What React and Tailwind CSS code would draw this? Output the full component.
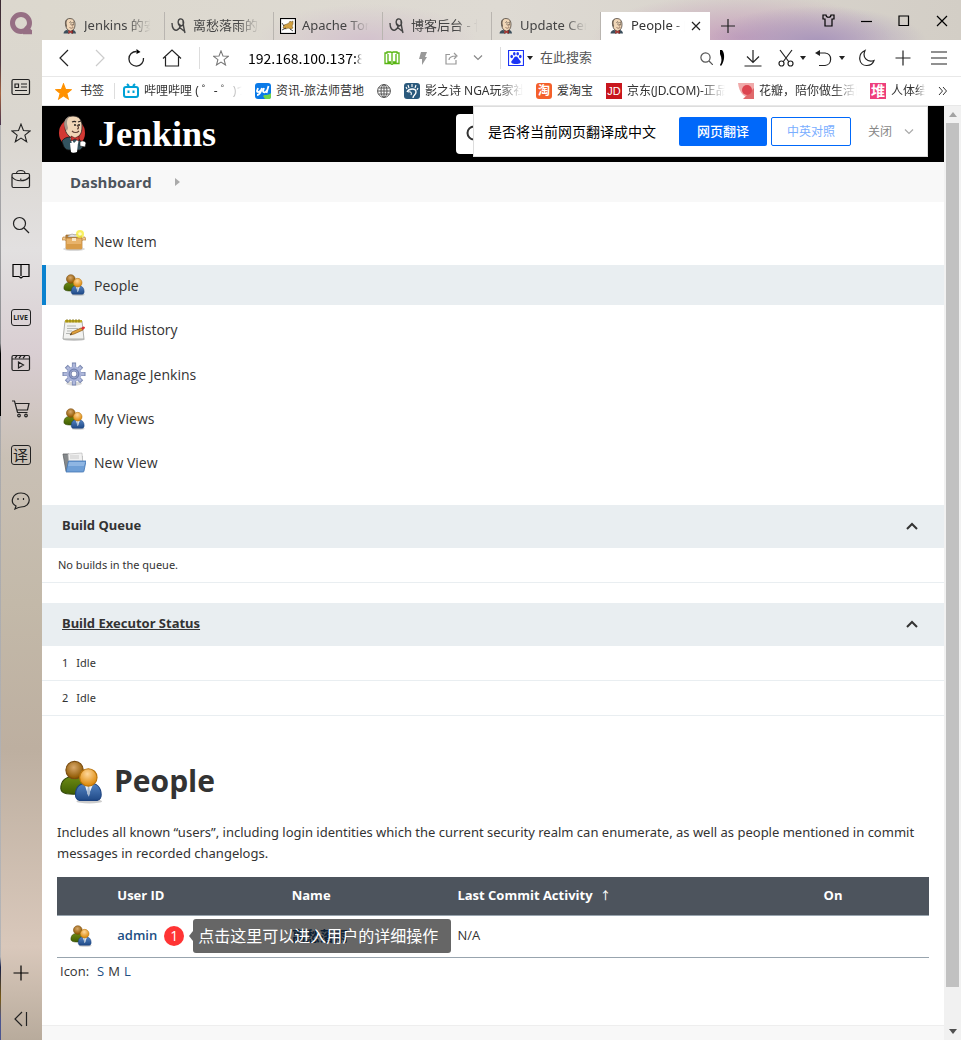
import React from 'react';

const Icon = ({ w = 16, h = 16, box, color = '#222', width = 1.2, fill = 'none', className = '', children }) => (
  <svg
    width={w}
    height={h}
    viewBox={box || `0 0 ${w} ${h}`}
    fill={fill}
    stroke={color}
    strokeWidth={width}
    className={`shrink-0 ${className}`}
    aria-hidden="true"
  >
    {children}
  </svg>
);

const ButlerHead = () => (
  <g stroke="none">
    <path d="M3 31c0-4 3-6 6-7l10-1c5 1 9 3 9 8z" fill="#3c4f5c" />
    <path d="M11 22h9l-1 9h-6z" fill="#fff" />
    <path d="M7 13C6 6 9 1 16 1s10 5 10 11-1 9-4 12-7 3-10 0-4-5-5-11z" fill="#f0d6b7" stroke="#3a302b" strokeWidth="1.4" />
    <path d="M7 15C5 9 7 3 12 2c-3 3-3 6-3 9l1 5-1 3z" fill="#6d6156" />
    <path d="M15 9c2-2 3-1 4 0M21 9l3-1" fill="none" stroke="#3a302b" strokeWidth="1.5" />
    <circle cx="18" cy="12" r="1.200" fill="#222" />
    <circle cx="23" cy="12" r="1.200" fill="#222" />
    <path d="M20 12c2 2 3 3 1 4l-2-1M15 19c3 2 6 2 8-1" fill="none" stroke="#69483a" strokeWidth="1.3" />
    <path d="M13 25l4 2 4-2v6l-4-2-4 2z" fill="#d33833" stroke="#5d1f1c" />
  </g>
);

const JenkinsFavicon = () => (
  <Icon box="0 0 32 32"><ButlerHead /></Icon>
);

const JenkinsLogo = () => (
  <Icon w={30} h={40} box="0 0 30 40">
    <g stroke="none">
      <ellipse cx="14" cy="19" rx="13" ry="14" fill="#d33833" />
      <path d="M4 27c2-3 5-4 9-4 5 0 9 2 11 6l1 4-3 3H10c-4-1-5-5-6-9z" fill="#33535f" stroke="#141414" strokeWidth="0.8" />
      <path d="M12 23l4 6 5-5-1 6h-6z" fill="#fff" />
      <path d="M7 12C6 6 9 2 15 2s9 4 9 10-1 8-4 11-6 2-9-1-4-5-4-10z" fill="#f0d6b7" stroke="#2b2523" strokeWidth="0.8" />
      <path d="M7 14C5 8 7 4 12 2c-3 3-3 5-3 8l1 4-1 3z" fill="#a4978b" />
      <path d="M14 8c2-1 3-1 4 0M20 8l3-1" fill="none" stroke="#2b2523" />
      <circle cx="17" cy="11" r="0.9" fill="#111" />
      <circle cx="21" cy="11" r="0.9" fill="#111" />
      <path d="M19 11c2 2 2 4 0 4M14 17c2 2 5 2 7 0" fill="none" stroke="#5c4035" />
      <path d="M13 22l4 2 4-2v5l-4-2-4 2z" fill="#d33833" stroke="#4a1412" strokeWidth="0.6" />
      <path d="M12 29h8l-1 9c-2 1-5 1-6 0z" fill="#fff" />
      <path d="M22 28c2-2 5-1 6 1l-1 4-5-1z" fill="#fff" stroke="#222" strokeWidth="0.6" />
    </g>
  </Icon>
);

const BlogFavicon = () => (
  <Icon color="#444" width={1.4}>
    <path d="M1 5c0 5 2 8 5 7 2-1 3-2 3-4M10 8C7 8 6 2 9 1c4-1 5 6 1 7l-2-2M12 2c0 5 1 9 2 13M8 9l5 4" />
  </Icon>
);

const TomcatFavicon = () => (
  <Icon w={16} h={16} color="none">
    <rect x="0.5" y="0.5" width="15" height="15" fill="#fff" stroke="#000" />
    <path d="M3 10l1-3 3-1 2-1 1-2 1 1 2-1v3l-1 2 1 2-2 1-3-1-2 1z" fill="#d2a041" stroke="#6d5420" strokeWidth="0.5" />
    <path d="M2 12l4-2M10 11l3 2M2 5l2 3" stroke="#222" strokeWidth="0.8" />
  </Icon>
);

const PeopleIcon = ({ size = 22 }) => (
  <Icon w={size} h={size} box="0 0 48 48" color="none">
    <defs>
      <radialGradient id="headBack" cx="0.45" cy="0.35" r="0.6">
        <stop offset="0" stopColor="#d8a86a" />
        <stop offset="1" stopColor="#8f5902" />
      </radialGradient>
      <radialGradient id="headFront" cx="0.45" cy="0.3" r="0.65">
        <stop offset="0" stopColor="#ffd79a" />
        <stop offset="1" stopColor="#dd8a0c" />
      </radialGradient>
      <linearGradient id="bodyBack" x1="0" y1="0" x2="0" y2="1">
        <stop offset="0" stopColor="#6d8a14" />
        <stop offset="1" stopColor="#3f5e02" />
      </linearGradient>
      <linearGradient id="bodyFront" x1="0" y1="0" x2="0" y2="1">
        <stop offset="0" stopColor="#5585c4" />
        <stop offset="1" stopColor="#204a87" />
      </linearGradient>
    </defs>
    <ellipse cx="33" cy="45" rx="14" ry="2.5" fill="#000" opacity="0.2" />
    <path d="M2 31c0-8 5-13 14-13s13 5 13 12v5c-6 3-21 3-25 0-1-1-2-2-2-4z" fill="url(#bodyBack)" stroke="#33480a" />
    <circle cx="17" cy="11" r="9.500" fill="url(#headBack)" stroke="#7a4c10" />
    <path d="M18 38c0-9 5-13 14-13 10 0 14 6 14 13 0 4-1 5-4 6H22c-3-1-4-2-4-6z" fill="url(#bodyFront)" stroke="#1d4380" />
    <path d="M28 27l4 12 5-12z" fill="#eef2f7" />
    <path d="M31.500 29h1.500l1 7-1.500 4-2-4z" fill="#a9bad0" />
    <circle cx="32" cy="19" r="9.500" fill="url(#headFront)" stroke="#b8730c" />
  </Icon>
);

const BoxIcon = () => (
  <Icon w={24} h={22} color="none">
    <ellipse cx="12" cy="19" rx="11" ry="2" fill="#000" opacity="0.15" />
    <path d="M4 5h15l2 5H3z" fill="#b77f3a" stroke="#8f5e22" strokeWidth="0.6" />
    <path d="M6 6l4-2 3 1 3-1 2 3H6z" fill="#e6e6e6" stroke="#999" strokeWidth="0.6" />
    <path d="M4 8h16v10c0 1-1 1-1 1H5s-1 0-1-1z" fill="#e8b36b" stroke="#b3762a" strokeWidth="0.7" />
    <path d="M4 14h16v4c0 1-1 1-1 1H5s-1 0-1-1z" fill="#d99c48" />
    <path d="M3 7H1L0 10h4M21 7h2l1 3h-4" fill="#f2c98d" stroke="#b3762a" strokeWidth="0.6" />
    <path d="M10 8h4v3h-4z" fill="#f9e6c6" />
    <circle cx="18" cy="4" r="4" fill="#f8ee3a" opacity="0.8" />
    <circle cx="18" cy="4" r="1.8" fill="#fffccb" />
  </Icon>
);

const NotepadIcon = () => (
  <Icon w={24} h={22} color="none">
    <ellipse cx="12" cy="20.5" rx="11" ry="1.5" fill="#000" opacity="0.2" />
    <path d="M3 2h17l2 18H1z" fill="#f2f2f0" stroke="#9a9c98" strokeWidth="0.8" />
    <path d="M3 1h17v2.500H3z" fill="#c0ab22" />
    <path d="M5 0v3.500M8 0v3.500M11 0v3.500M14 0v3.500M17 0v3.500" stroke="#7f6f10" strokeWidth="0.8" />
    <path d="M5 7h9M5 9.5h11M5 12h5M4 14.5h4" stroke="#b5b7b4" />
    <path d="M8 16l2-3 9-4 2 2-9 4z" fill="#e0a13c" stroke="#8c5a14" strokeWidth="0.7" />
    <path d="M19 9l2-1.500c2 0 2.500 1 1.500 2L21 11z" fill="#d33" />
    <path d="M8 16l1-2 1 1z" fill="#222" />
  </Icon>
);

const GearIcon = () => (
  <Icon w={24} h={24} color="none">
    <ellipse cx="12" cy="21.500" rx="8" ry="2" fill="#000" opacity="0.15" />
    <g stroke="#7684ad" strokeWidth="4.2">
      <path d="M12 .5v23M.5 12h23M4.300 4.300l15.400 15.400M19.700 4.300L4.300 19.700" />
    </g>
    <g stroke="#b0b9dc" strokeWidth="2.800">
      <path d="M12 1.500v21M1.500 12h21M5 5l14 14M19 5L5 19" />
    </g>
    <circle cx="12" cy="12" r="7.500" fill="#a8b2d8" />
    <circle cx="12" cy="12" r="4.800" stroke="#7181b0" strokeWidth="1.200" />
    <circle cx="12" cy="12" r="3" fill="#fff" stroke="#7e8ab2" />
  </Icon>
);

const FolderIcon = () => (
  <Icon w={24} h={22} color="none">
    <path d="M1 2h6l1 2h12v15H4z" fill="#85898c" stroke="#5f6366" strokeWidth="0.8" />
    <path d="M6 2l14-1 1 12H7z" fill="#f1f1f1" stroke="#b3b3b3" strokeWidth="0.6" />
    <path d="M8 4h9M8 6h9" stroke="#ccc" />
    <path d="M6.500 9H24l-2 10c0 1-1 1-2 1H4z" fill="#6f9fd6" stroke="#4175b3" strokeWidth="0.8" />
    <path d="M7 10h16l-1 4H6z" fill="#9dc0e8" opacity="0.7" />
  </Icon>
);

const Caret = ({ className = '' }) => (
  <span className={`h-0 w-0 shrink-0 border-x-[3px] border-t-[4px] border-x-transparent border-t-[#222] ${className}`} />
);

const StarPath = () => <path d="M9 1l2.2 5.8 6 .3-4.7 3.8 1.6 6L9 13.6 3.900 16.900l1.600-6L.8 7.100l6-.3z" />;

const tabs = [
  { title: 'Jenkins 的安装', icon: <JenkinsFavicon /> },
  { title: '离愁落雨的主页', icon: <BlogFavicon /> },
  { title: 'Apache Tomcat', icon: <TomcatFavicon /> },
  { title: '博客后台 - 博', icon: <BlogFavicon /> },
  { title: 'Update Center', icon: <JenkinsFavicon /> },
];

const bookmarks = [
  {
    title: '哔哩哔哩 ( ゜- ゜)つロ',
    icon: (
      <Icon color="#00a1d6" width={2}>
        <rect x="1" y="4" width="14" height="10" rx="2" />
        <path d="M4 1l2 2M12 1l-2 2" />
        <path d="M5.500 7.500v2.500M10.500 7.500v2.500" />
      </Icon>
    ),
  },
  {
    title: '资讯-旅法师营地',
    icon: (
      <Icon color="#fff" width={1.800}>
        <rect width="16" height="16" rx="3" fill="#0a7ae8" stroke="none" />
        <path d="M3 5l-1 3c0 2 4 1 5-3-1 4-2 7-5 7M9 5l-1 3c0 2 3 2 4-1M13.500 3l-2 7" />
        <path d="M8 13c2-2 5 0 8-3v3c0 3-1 3-3 3h-3z" fill="#6fd44b" stroke="none" />
      </Icon>
    ),
  },
  {
    title: '',
    label: '网页',
    icon: (
      <Icon w={14} h={14} color="#555" width={1}>
        <circle cx="7" cy="7" r="6.400" />
        <ellipse cx="7" cy="7" rx="3" ry="6.400" />
        <path d="M7 .6v12.800M.6 7h12.800M1.500 4h11M1.500 10h11" />
      </Icon>
    ),
  },
  {
    title: '影之诗 NGA玩家社区',
    icon: (
      <Icon color="#fff" width={1.4}>
        <rect width="16" height="16" rx="3" fill="#2b5a7d" stroke="none" />
        <path d="M3 9c2-4 9-4 9 0 0 3-3 3-3 6" width="2" />
        <path d="M4 9c3-1 4 1 3 3M3 6L2 4M5 5L4 2M8 4V1M11 5l1-3M13 7l1-2" strokeWidth="1.100" />
      </Icon>
    ),
  },
  {
    title: '爱淘宝',
    icon: (
      <span className="flex size-4 items-center justify-center rounded-[3px] bg-[#f4602a] text-[12px] font-bold leading-none text-white">淘</span>
    ),
  },
  {
    title: '京东(JD.COM)-正品',
    icon: (
      <span className="flex size-4 items-center justify-center bg-[#c8161d] font-['Liberation_Sans',sans-serif] text-[11px] leading-none text-white">JD</span>
    ),
  },
  {
    title: '花瓣，陪你做生活的',
    icon: (
      <Icon color="none">
        <path d="M0 0h16v16C6 15 1 10 0 0z" fill="#f0a9a9" />
        <path d="M16 5v11H5z" fill="#e06a6c" />
        <circle cx="9" cy="7" r="5" fill="#dd4550" />
      </Icon>
    ),
  },
  {
    title: '人体结构',
    short: true,
    icon: (
      <span className="flex size-4 items-center justify-center bg-[#ee3f7d] text-[14px] font-bold leading-none text-white">堆</span>
    ),
  },
];

const railItems = [
  {
    label: '新闻',
    icon: (
      <Icon w={20} h={18}>
        <rect x="1" y="1.500" width="17.500" height="15" rx="1.500" />
        <path d="M4 6h3.500v3.500H4zM10 6h6M10 9h6M4 12.500h12" />
      </Icon>
    ),
  },
  { label: '收藏', icon: <Icon w={20} h={20} box="0 0 18 18" width={1}><StarPath /></Icon> },
  {
    label: '工具箱',
    icon: (
      <Icon w={20} h={20}>
        <rect x="1" y="4.500" width="17.500" height="14" rx="1.500" />
        <path d="M5.500 4.500c0-4 8.500-4 8.500 0M1 8c4 5 13 5 17.500 0M9.800 9.500v1.500" />
      </Icon>
    ),
  },
  {
    label: '搜索',
    icon: (
      <Icon w={18} h={18}>
        <circle cx="7.500" cy="7.500" r="6" />
        <path d="M12 12l5 5" />
      </Icon>
    ),
  },
  {
    label: '阅读',
    icon: (
      <Icon w={18} h={16} color="#000" width={1.200}>
        <path d="M1 1.500h16v12h-6l-2 1.500-2-1.500H1zM9 2v11" />
      </Icon>
    ),
  },
  {
    label: '直播',
    icon: (
      <span className="flex h-[17px] w-5 items-center justify-center rounded-[3px] border border-[#222] font-['Open_Sans',sans-serif] text-[7px] font-bold leading-none text-[#222]">LIVE</span>
    ),
  },
  {
    label: '视频',
    icon: (
      <Icon w={20} h={18}>
        <rect x="1" y="1.500" width="17.500" height="15" rx="1.500" />
        <path d="M1 5h17.500M4 4l2-2M8 4l2-2M12 4l2-2M7.500 8l5 3-5 3z" />
      </Icon>
    ),
  },
  {
    label: '购物',
    icon: (
      <Icon w={20} h={18}>
        <path d="M1 1h2.500l3 11.500h10M4.500 3.500H18L16.500 10H6" />
        <circle cx="8" cy="15.500" r="1.300" />
        <circle cx="15" cy="15.500" r="1.300" />
      </Icon>
    ),
  },
  {
    label: '翻译',
    icon: (
      <span className="flex size-5 items-center justify-center rounded-[3px] border border-[#222] text-[15px] leading-none text-[#222]">译</span>
    ),
  },
  {
    label: '消息',
    icon: (
      <Icon w={20} h={18}>
        <path d="M4 17l1-3C-2 10 2 1 10 1c11 0 11 14 0 14-2 0-4 1-6 2z" />
        <path d="M7 6v2M12.500 6v2" />
      </Icon>
    ),
  },
];

const tasks = [
  { title: 'New Item', icon: <BoxIcon /> },
  { title: 'People', icon: <PeopleIcon />, active: true },
  { title: 'Build History', icon: <NotepadIcon /> },
  { title: 'Manage Jenkins', icon: <GearIcon /> },
  { title: 'My Views', icon: <PeopleIcon /> },
  { title: 'New View', icon: <FolderIcon /> },
];

const DesktopEdge = () => (
  <div className="w-px shrink-0 bg-[linear-gradient(180deg,#3a2a33_0%,#4f3840_6%,#a3613f_9%,#4a3550_12%,#b0b0b2_12%,#8f8f92_33%,#000_34%,#000_40%,#a9a9ab_40%,#b5b5b7_92%,#17204a_93%,#7a5a12_96%,#4b5590_98%)]" />
);

const Rail = () => (
  <aside className="flex w-[41px] shrink-0 flex-col items-center bg-[linear-gradient(180deg,#dcd8ce_0%,#dad6cf_12%,#e2e0e0_24%,#d9ced2_34%,#c9c0b5_44%,#c3b9a9_58%,#bdafa0_72%,#d9c8bb_91%,#b8ab9c_100%)] pr-[2px]">
    <div className="flex h-16 items-start pt-[11px]">
      <Icon w={24} h={24} color="#966f84" width={5}>
        <circle cx="12" cy="12" r="8.500" />
        <path d="M14 21.200h9M16 16l6 5" strokeWidth="4" />
      </Icon>
    </div>
    {railItems.map(({ label, icon }) => (
      <button key={label} type="button" aria-label={label} className="flex h-[46px] w-full items-center justify-center">
        {icon}
      </button>
    ))}
    <button type="button" aria-label="添加" className="mt-auto flex h-[50px] w-full items-center justify-center">
      <Icon color="#000"><path d="M8 .5v15M.5 8h15" /></Icon>
    </button>
    <button type="button" aria-label="收起" className="flex h-[42px] w-full items-center justify-center">
      <Icon><path d="M9 1L2 8l7 7M13.500 1v14" /></Icon>
    </button>
  </aside>
);

const TabStrip = () => (
  <div className="flex h-10 items-end bg-[radial-gradient(ellipse_110px_36px_at_775px_42px,#a896bb_0%,transparent_100%),radial-gradient(ellipse_150px_44px_at_700px_38px,#c6a0bc_0%,transparent_100%),radial-gradient(ellipse_110px_36px_at_325px_40px,#d3c2cd_0%,transparent_100%),linear-gradient(90deg,#dcd8ce_0%,#dedad3_50%,#d3cec6_100%)] pl-[14px]">
    {tabs.map(({ title, icon }, i) => (
      <button key={i} type="button" className="flex h-7 min-w-0 max-w-[109px] flex-1 items-center gap-[6px] border-r border-[#b9b5b0] pl-[6px] pr-3 text-[13px] text-[#444]">
        {icon}
        <span className="min-w-0 flex-1 overflow-hidden whitespace-nowrap text-left mask-[linear-gradient(90deg,#000_65%,transparent_98%)]">{title}</span>
      </button>
    ))}
    <div className="flex h-7 w-[109px] shrink-0 items-center gap-[6px] bg-white pl-2 text-[13px] text-[#333]">
      <JenkinsFavicon />
      <span className="w-[54px] overflow-hidden whitespace-nowrap mask-[linear-gradient(90deg,#000_82%,transparent)]">People - [Jenkins]</span>
      <button type="button" aria-label="关闭标签">
        <Icon w={10} h={10}><path d="M1 1l8 8M9 1L1 9" /></Icon>
      </button>
    </div>
    <button type="button" aria-label="新标签" className="mb-[7px] ml-[11px]">
      <Icon w={14} h={14}><path d="M7 0v14M0 7h14" /></Icon>
    </button>
    <div className="mb-[13px] ml-auto flex items-center gap-[26px] pr-[13px]">
      <button type="button" aria-label="皮肤">
        <Icon w={13} h={13} color="#000"><path d="M1 1h3c0 3 5 3 5 0h3v4h-2v7H3V5H1z" /></Icon>
      </button>
      <button type="button" aria-label="最小化">
        <Icon w={11} h={12} color="#000"><path d="M0 6.500h11" /></Icon>
      </button>
      <button type="button" aria-label="最大化">
        <Icon w={12} h={12} color="#000"><path d="M1 1h9.500v9.500H1z" /></Icon>
      </button>
      <button type="button" aria-label="关闭窗口">
        <Icon w={12} h={12} color="#000"><path d="M1 1l10 10M11 1L1 11" /></Icon>
      </button>
    </div>
  </div>
);

const ToolButton = ({ label, className = 'w-9', children }) => (
  <button type="button" aria-label={label} className={`flex h-9 shrink-0 items-center justify-center ${className}`}>
    {children}
  </button>
);

const Toolbar = () => (
  <div className="flex h-[37px] items-center border-b border-[#e8e8e8] bg-white pl-1">
    <ToolButton label="后退">
      <Icon w={18} h={18}><path d="M13 1L5 9l8 8" /></Icon>
    </ToolButton>
    <ToolButton label="前进">
      <Icon w={18} h={18} color="#ccc"><path d="M5 1l8 8-8 8" /></Icon>
    </ToolButton>
    <ToolButton label="刷新">
      <Icon w={18} h={18} width={1.300}>
        <path d="M9.500 2.500A7.300 7.300 0 1 0 16.500 9" />
        <path d="M9.500 0v5l4-2z" fill="#000" stroke="none" />
      </Icon>
    </ToolButton>
    <ToolButton label="主页">
      <Icon w={20} h={18}><path d="M1 9.500L10 1l9 8.500M3.500 8v9h13V8" /></Icon>
    </ToolButton>
    <span className="ml-[9px] h-[22px] w-px shrink-0 bg-[#ddd]" />
    <ToolButton label="收藏网页" className="ml-[3px] w-9">
      <Icon w={16} h={16} box="0 0 18 18" color="#777"><StarPath /></Icon>
    </ToolButton>
    <input
      aria-label="地址"
      defaultValue="192.168.100.137:8080"
      className="ml-[9px] w-[114px] shrink-0 font-['Noto_Sans_CJK_SC',sans-serif] text-[14px] text-black outline-none mask-[linear-gradient(90deg,#000_94%,transparent)]"
    />
    <ToolButton label="阅读模式" className="ml-[14px] w-8">
      <Icon w={16} h={14} color="#57b512" width={1.300}>
        <path d="M1 2h2v-1h4l1 1 1-1h4v1h2v10.500H9.500L8 13.500l-1.500-1H1zM8 2v10M4 3v8h3M12 3v8H9" />
      </Icon>
    </ToolButton>
    <ToolButton label="极速" className="w-[30px]">
      <Icon w={8} h={13} color="none"><path d="M2 0h6L6 5h2L3 13V7H0z" fill="#999" /></Icon>
    </ToolButton>
    <ToolButton label="分享" className="w-[26px]">
      <Icon w={13} h={13} color="#999"><path d="M5 2.500H1v9.500h10V8M4 8c0-3 3-4 7-4M9 1l3 3-3 3" /></Icon>
    </ToolButton>
    <ToolButton label="更多" className="w-7">
      <Icon w={10} h={6} color="#888"><path d="M1 .5l4 4 4-4" /></Icon>
    </ToolButton>
    <span className="ml-2 h-[22px] w-px shrink-0 bg-[#ddd]" />
    <button type="button" aria-label="搜索引擎" className="ml-[7px] flex items-center gap-[3px]">
      <Icon color="none">
        <path d="M.5.500h15v15H.500z" fill="#fff" stroke="#1b34f5" />
        <g fill="#1b34f5">
          <ellipse cx="3.700" cy="6.500" rx="1.300" ry="1.700" />
          <ellipse cx="6.300" cy="3.800" rx="1.300" ry="1.800" />
          <ellipse cx="9.700" cy="3.800" rx="1.300" ry="1.800" />
          <ellipse cx="12.300" cy="6.500" rx="1.300" ry="1.700" />
          <path d="M8 6.500c2 0 2 2 4 4s0 3.500-4 3.500-6-1.500-4-3.500 2-4 4-4z" />
        </g>
      </Icon>
      <Caret />
    </button>
    <input
      aria-label="搜索"
      placeholder="在此搜索"
      className="ml-[7px] w-0 min-w-0 flex-1 text-[13px] outline-none placeholder:text-[#555]"
    />
    <ToolButton label="开始搜索" className="w-4">
      <Icon w={13} h={13} color="#555"><circle cx="5.500" cy="5.500" r="4.600" /><path d="M9 9l4 4" /></Icon>
    </ToolButton>
    <Icon w={5} h={16} color="none" className="ml-[6px]"><path d="M0 0h2c3 3 3 11-1 16l-1-1c2-3 2-7 0-11z" fill="#000" /></Icon>
    <ToolButton label="下载" className="ml-[10px] w-9">
      <Icon w={18} h={18}><path d="M9 1v12M3 7.500l6 6 6-6M.5 17h17" /></Icon>
    </ToolButton>
    <ToolButton label="截图" className="ml-[6px] w-[30px] gap-[6px]">
      <Icon w={16} h={18}>
        <path d="M2 1l9 12M14 1L5 13" />
        <circle cx="3.500" cy="14.500" r="2.500" />
        <circle cx="12.500" cy="14.500" r="2.500" />
      </Icon>
      <Caret />
    </ToolButton>
    <ToolButton label="恢复" className="ml-2 w-[30px] gap-[7px]">
      <Icon w={17} h={18}>
        <path d="M3 4h7c8 1 7 12 0 12.500H4" />
        <path d="M0 4l5-3v6z" fill="#222" stroke="none" />
      </Icon>
      <Caret />
    </ToolButton>
    <ToolButton label="夜间模式" className="ml-[4px] w-9">
      <Icon w={16} h={18}><path d="M6 1.500C-2 5-.5 17 8 16.500c4 0 6-2 7-5C8 14 3 8 6 1.500z" /></Icon>
    </ToolButton>
    <ToolButton label="添加功能">
      <Icon><path d="M8 .5v15M.5 8h15" /></Icon>
    </ToolButton>
    <ToolButton label="菜单" className="mr-1 w-9">
      <Icon w={16} h={14}><path d="M0 1h16M0 7h16M0 13h16" /></Icon>
    </ToolButton>
  </div>
);

const BookmarkBar = () => (
  <nav className="flex h-[29px] items-center gap-[13px] border-b border-[#e8e8e8] bg-white pl-[13px] text-[12px] text-[#333]">
    <a href="#bookmarks" className="-mr-[3px] flex items-center gap-2">
      <Icon w={17} h={17} box="0 0 18 18" color="#ff9100" fill="#ff9100"><StarPath /></Icon>
      书签
    </a>
    <span className="-mr-[5px] h-4 w-px bg-[#ddd]" />
    {bookmarks.map(({ title, label, icon, short }, i) => (
      <a key={i} href="#bookmark" aria-label={label} className="flex shrink-0 items-center gap-[5px]">
        {icon}
        {title && (
          <span
            className={`overflow-hidden whitespace-nowrap ${short ? 'w-[34px]' : 'max-w-[98px]'} ${title.length > 8 || short ? 'mask-[linear-gradient(90deg,#000_75%,transparent)]' : ''}`}
          >
            {title}
          </span>
        )}
      </a>
    ))}
    <button type="button" aria-label="更多书签" className="ml-auto mr-[14px]">
      <Icon w={9} h={10} color="#333" width={1}><path d="M1 1l3.500 4L1 9M5 1l3.500 4L5 9" /></Icon>
    </button>
  </nav>
);

const TranslateBar = () => (
  <div className="absolute right-[33px] top-0 z-10 flex h-[51px] w-[455px] items-center border border-[#ddd] bg-white pl-[14px] text-[14px] text-black">
    是否将当前网页翻译成中文
    <button type="button" className="ml-[23px] h-[29px] w-[88px] rounded-[2px] bg-[#0068fa] text-[13px] font-medium text-white">网页翻译</button>
    <button type="button" className="ml-[4px] h-[29px] w-[80px] rounded-[2px] border border-[#0068fa] text-[12px] text-[#7aaeff]">中英对照</button>
    <button type="button" className="ml-[17px] flex items-center gap-[12px] text-[12px] text-[#888]">
      关闭
      <Icon w={10} h={6} color="#aaa"><path d="M1 .5l4 4 4-4" /></Icon>
    </button>
  </div>
);

const PaneHeader = ({ title, underline }) => (
  <div className="flex h-[43px] items-center justify-between bg-[#e9eef1] pb-px pl-5 pr-[26px] text-[13px] font-bold text-[#333]">
    <h2 className={underline ? 'underline' : ''}>{title}</h2>
    <button type="button" aria-label={`Collapse ${title}`}>
      <Icon w={12} h={8} width={2} color="#333"><path d="M1 7l5-5 5 5" /></Icon>
    </button>
  </div>
);

const Executor = ({ number }) => (
  <li className="flex h-[35px] items-center gap-2 border-b border-[#e9eef1] pl-5">
    <span>{number}</span>
    <span>Idle</span>
  </li>
);

const PeopleTable = () => (
  <table className="mt-[13px] w-full table-fixed text-left text-[13px]">
    <colgroup>
      <col className="w-[6%]" />
      <col className="w-[20%]" />
      <col className="w-[19%]" />
      <col className="w-[42%]" />
      <col />
    </colgroup>
    <thead>
      <tr className="h-[38px] border-b border-[#98a4ae] bg-[#4d545d] text-white">
        <th aria-label="Icon" />
        <th className="px-2">User ID</th>
        <th className="px-2">Name</th>
        <th className="px-2">Last Commit Activity <span className="ml-1 text-[11px] font-medium">↑</span></th>
        <th className="px-2">On</th>
      </tr>
    </thead>
    <tbody>
      <tr className="h-[42px] border-b border-[#98a4ae]">
        <td className="pl-[13px]"><PeopleIcon /></td>
        <td className="px-2">
          <div className="relative flex items-center gap-[7px]">
            <a href="#admin" className="font-semibold text-[#204f84]">admin</a>
            <span className="flex size-5 items-center justify-center rounded-full bg-[#ff3434] text-[14px] leading-none text-white">1</span>
            <div className="absolute left-[76px] z-10 flex h-[34px] w-[258px] items-center rounded-[3px] bg-black/60 pl-[5px] text-[16px] text-white">
              <span className="absolute -left-1 border-y-[5px] border-r-[4px] border-y-transparent border-r-black/60" />
              点击这里可以进入用户的详细操作
            </div>
          </div>
        </td>
        <td className="px-2"><a href="#admin" className="text-[14px] font-semibold text-[#204f84]">离愁落雨</a></td>
        <td className="px-2">N/A</td>
        <td />
      </tr>
    </tbody>
  </table>
);

const JenkinsPage = () => (
  <div className="flex min-w-0 flex-1 flex-col overflow-hidden bg-white font-['Open_Sans','Noto_Sans_CJK_SC',sans-serif] text-[#333]">
    <header className="flex h-14 shrink-0 items-center justify-between bg-black pl-4 pr-[88px]">
      <a href="#home" className="flex items-center gap-[10px] font-['Liberation_Serif',serif] text-[36px] font-bold leading-none text-white">
        <JenkinsLogo />
        Jenkins
      </a>
      <div className="flex h-10 w-[400px] items-center rounded-[4px] bg-white pl-[10px]">
        <Icon w={18} h={18} width={2} color="#333"><circle cx="8" cy="8" r="6.500" /><path d="M13 13l4 4" /></Icon>
      </div>
    </header>
    <nav className="flex h-10 shrink-0 items-center gap-[23px] bg-[#f8f8f8] pl-7 text-[15px] font-bold text-[#4d545d]">
      <a href="#dashboard">Dashboard</a>
      <Icon w={5} h={8} color="none"><path d="M0 0l5 4-5 4z" fill="#aaa" /></Icon>
    </nav>
    <nav className="mt-[19px] flex h-[262px] shrink-0 flex-col justify-between text-[14px] font-medium">
      {tasks.map(({ title, icon, active }) => (
        <a
          key={title}
          href="#task"
          className={`flex h-10 items-center gap-2 border-l-4 pl-4 ${active ? 'border-[#0b82cf] bg-[#e9eef1]' : 'border-transparent'}`}
        >
          <span className="flex w-6 justify-center">{icon}</span>
          {title}
        </a>
      ))}
    </nav>
    <section className="mt-[22px] font-['Noto_Sans',sans-serif] text-[11px]">
      <PaneHeader title="Build Queue" />
      <p className="flex h-[35px] items-center border-b border-[#e9eef1] pl-4">No builds in the queue.</p>
    </section>
    <section className="mt-5 font-['Noto_Sans',sans-serif] text-[11px]">
      <PaneHeader title="Build Executor Status" underline />
      <ul>
        <Executor number={1} />
        <Executor number={2} />
      </ul>
    </section>
    <main className="flex-1 px-[15px] pt-[40px]">
      <h1 className="flex h-12 items-center gap-[9px] text-[30px] font-bold">
        <span className="flex w-12 justify-center pt-1"><PeopleIcon size={44} /></span>
        People
      </h1>
      <p className="mt-[18px] font-['Noto_Sans',sans-serif] text-[13px] leading-[21px]">
        Includes all known “users”, including login identities which the current security realm can enumerate, as well as people mentioned in commit messages in recorded changelogs.
      </p>
      <PeopleTable />
      <div className="mt-1 flex gap-1 pl-[3px] text-[13px]">
        <span className="mr-1">Icon:</span>
        <a href="#small" className="font-medium text-[#204f84]">S</a>
        <span>M</span>
        <a href="#large" className="font-medium text-[#204f84]">L</a>
      </div>
    </main>
    <footer className="h-[15px] shrink-0 border-t border-[#eee] bg-[#f8f8f8]" />
  </div>
);

const ScrollBar = () => (
  <div className="flex w-[17px] shrink-0 flex-col items-center bg-[#f1f1f1]">
    <span className="my-[6px] border-x-4 border-b-[5px] border-x-transparent border-b-[#a3a3a3]" />
    <div className="min-h-0 w-full flex-1 px-[2px]">
      <div className="h-[96%] bg-[#c1c1c1]" />
    </div>
    <span className="my-[6px] border-x-4 border-t-[5px] border-x-transparent border-t-[#505050]" />
  </div>
);

export default function App() {
  return (
    <div className="flex h-screen overflow-hidden font-['Noto_Sans','Noto_Sans_CJK_SC',sans-serif]">
      <DesktopEdge />
      <Rail />
      <div className="flex min-w-0 flex-1 flex-col">
        <TabStrip />
        <Toolbar />
        <BookmarkBar />
        <div className="relative flex min-h-0 flex-1">
          <JenkinsPage />
          <ScrollBar />
          <TranslateBar />
        </div>
      </div>
    </div>
  );
}
